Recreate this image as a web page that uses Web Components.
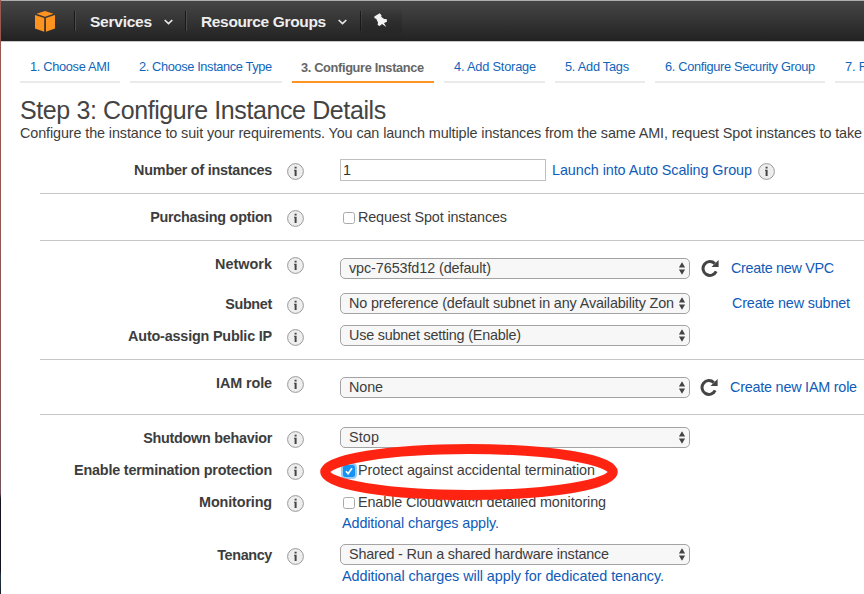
<!DOCTYPE html>
<html lang="en">
<head>
<meta charset="utf-8">
<title>Configure Instance Details</title>
<style>
html,body{margin:0;width:864px;height:594px;overflow:hidden;background:#fff}
body{font:14.4px/20px "Liberation Sans",Arial,sans-serif;color:#3d3d3d}
</style>
</head>
<body>
<launch-wizard></launch-wizard>
<script>
const define=(name,markup,setup)=>{
  const t=document.createElement('template');
  t.innerHTML=markup;
  customElements.define(name,class extends HTMLElement{
    connectedCallback(){
      if(this.shadowRoot)return;
      this.attachShadow({mode:'open'}).append(t.content.cloneNode(true));
      if(setup)setup(this,this.shadowRoot);
    }
  });
};

/* Text run tracked to an exact measure given in the w attribute. */
define('text-run',`<style>:host{display:inline-block;white-space:nowrap}span{display:inline-block;white-space:pre}</style><span><slot></slot></span>`,
(el,root)=>{
  const w=+el.getAttribute('w'),s=root.querySelector('span');
  if(!w)return;
  const n=el.textContent.length;
  s.style.letterSpacing=((w-s.getBoundingClientRect().width)/(n-.5))+'px';
  el.style.width=w+'px';
});

define('info-icon',`<style>:host{display:block;width:17px;height:17px}svg{display:block}</style>
<svg width="17" height="17" viewBox="0 0 17 17"><circle cx="8.5" cy="8.5" r="7.9" fill="#eee" stroke="#999"/><path d="M7.6 3.8h2v1.8h-2zM7 6.8h2.6v6.2h-2V7.7H7z" fill="#444"/></svg>`);

define('refresh-icon',`<style>:host{display:block;width:18px;height:18px;margin-top:1px}svg{display:block}</style>
<svg width="18" height="18" viewBox="0 0 18 18"><path d="M13.8 4.6A6.9 6.9 0 1 0 15.2 12.4" fill="none" stroke="#444" stroke-width="3"/><path d="M17.6 1v7.1h-7.1z" fill="#444"/></svg>`);

define('select-box',`<style>
:host{display:flex;box-sizing:border-box;width:350px;height:21px;border:1px solid #a3a3a3;border-radius:5px;background:#f7f7f7;padding:0 3px 0 8px;align-items:center;justify-content:space-between;line-height:19px}
svg{display:block;flex:none}</style>
<slot></slot><svg width="8" height="13" viewBox="0 0 8 13"><path d="M4 .3 7.1 5.5H.9zM4 12.7 7.1 7.5H.9z" fill="#444"/></svg>`);

define('check-box',`<style>
:host{display:flex;height:20px;padding-left:3px;gap:3px;align-items:center}
i{box-sizing:border-box;width:12px;height:12px;border:1px solid #aaa;border-radius:2.5px;background:#fff;flex:none;position:relative;top:1px}
svg{display:none}
:host([checked]) i{border:0;background:#1593f5;box-shadow:0 0 0 2px #9acbf5}
:host([checked]) svg{display:block}</style>
<i><svg width="12" height="12" viewBox="0 0 12 12"><path d="M3 6.3 5.1 8.8 9 3.2" fill="none" stroke="#fff" stroke-width="1.6"/></svg></i><slot></slot>`);

define('ui-link',`<style>:host{display:inline-block;color:#0f5bb8;white-space:nowrap}</style><slot></slot>`);

define('number-box',`<style>:host{display:block;box-sizing:border-box;width:206px;height:22px;border:1px solid #bfbfbf;padding-left:2px;line-height:20px;color:#333}</style><slot></slot>`);

/* Form row: right-aligned label, info button, control column. */
define('form-row',`<style>
:host{display:grid;grid-template-columns:232px 17px 1fr;column-gap:15px;height:20px}
.label{font-weight:bold;text-align:right;height:20px}
info-icon{margin-top:3px}
.control{margin-left:21px}
</style>
<div class="label"><slot name="label"></slot></div><info-icon></info-icon><div class="control"><slot></slot></div>`,
(el,root)=>{
  el.style.height=el.getAttribute('h')+'px';
  root.querySelector('.control').style.marginTop=(el.getAttribute('shift')||0)+'px';
});

define('h-line',`<style>:host{display:flex;align-items:flex-start;gap:var(--gap,0)}</style><slot></slot>`);

define('form-group',`<style>:host{display:block;box-sizing:border-box;margin-left:39px;padding-top:13px;border-bottom:1px solid #c6c6c6}:host([first]){padding-top:10px}:host([last]){border:0}</style><slot></slot>`);

define('step-tab',`<style>
:host{display:block;box-sizing:border-box;flex:none;height:33px;padding:8px 0 0 10px;border-bottom:2px solid #eaeaea;font-size:12.8px;line-height:18px;color:#1166bb}
:host([active]){border-bottom-color:#ff9426;color:#666;font-weight:bold;padding-top:9px}</style><slot></slot>`,
el=>el.style.width=el.getAttribute('width')+'px');

define('step-tabs',`<style>:host{display:flex;gap:10px;padding:8px 0 0 19px;overflow:hidden}</style><slot></slot>`);

define('nav-item',`<style>
:host{display:flex;align-items:center;box-sizing:border-box;height:20px;border-left:1px solid #191919;box-shadow:inset 1px 0 #4c4c4c;padding-left:15px;gap:12px;color:#eee;font:bold 15.5px/20px "Liberation Sans",Arial,sans-serif}
svg{display:block;margin-top:1px}</style><slot></slot><svg width="9" height="6" viewBox="0 0 9 6"><path d="M.7 1 4.5 4.6 8.3 1" fill="none" stroke="#e8e8e8" stroke-width="1.7"/></svg>`,
el=>el.style.width=el.getAttribute('width')+'px');

define('top-bar',`<style>
:host{display:flex;box-sizing:border-box;height:42px;border-top:1px solid #adadad;border-bottom:1px solid #c8c8c8;background:linear-gradient(#464646,#222);align-items:center}
text-run{padding-top:1px}
.cube{margin-left:34px;width:39px;height:21px}
.pin{box-sizing:border-box;width:42px;height:40px;display:flex;align-items:center}
.pin div{box-sizing:border-box;width:41px;height:29px;border-radius:0 0 3px 3px;background:linear-gradient(#2c2c2c00,#272727);padding:5px 0 0 13px;margin-top:3px}
.pin:before{content:"";height:20px;width:1px;background:#191919;box-shadow:1px 0 #4c4c4c}
svg{display:block}</style>
<div class="cube"><svg width="20" height="21" viewBox="0 0 20 21"><path d="M10 0 18.5 2.7 10 5.7 1.5 2.7zM0 4 9.2 7.1V20.8L0 17.4zM20 4 10.9 7.1V20.8L20 17.4z" fill="#ff9320"/></svg></div>
<nav-item width="111"><text-run w="62">Services</text-run></nav-item>
<nav-item width="175"><text-run w="125">Resource Groups</text-run></nav-item>
<div class="pin"><div><svg width="14" height="15" viewBox="0 0 14 15"><path d="M5.7.2 7.5 2.2 7.2 3.7 10.1 6 12.6 5.9 13 8.7 10 9.9 12.3 13.9 8 11 5.7 12.9 3.6 12 4 9.4 2.2 5.8.5 5.3.3 3.5z" fill="#f3f3f3"/></svg></div></div>`);

/* Emphasis ring over the termination row. */
define('highlight-ring',`<style>:host{position:absolute;left:320px;top:444px;width:298px;height:56px;pointer-events:none}svg{display:block}</style>
<svg width="298" height="56" viewBox="0 0 298 56"><ellipse cx="149" cy="28" rx="143.8" ry="23" fill="none" stroke="#ff2412" stroke-width="10"/></svg>`);

define('launch-wizard',`<style>
:host{display:flex;position:relative;width:864px;height:594px;overflow:hidden}
.edge{width:1px;flex:none;background:linear-gradient(#9b5850,#8c5551 60%,#735059 83%,#141420 84%,#10131e 96%,#26384b 97%,#141b28)}
main{flex:1;min-width:0}
h1{margin:15px 0 0 19px;font:normal 25px/24px "Liberation Sans",Arial,sans-serif;color:#444;white-space:nowrap}
p{margin:0 0 0 19px;height:27px;padding-top:1px;line-height:21px;white-space:nowrap}
</style>
<div class="edge"></div>
<main>
<top-bar></top-bar>
<step-tabs>
<step-tab width="100"><text-run w="80">1. Choose AMI</text-run></step-tab>
<step-tab width="152"><text-run w="133" style="margin-left:-1px">2. Choose Instance Type</text-run></step-tab>
<step-tab width="142" active><text-run w="123" style="margin-left:-1px">3. Configure Instance</text-run></step-tab>
<step-tab width="101"><text-run w="82">4. Add Storage</text-run></step-tab>
<step-tab width="90"><text-run w="64">5. Add Tags</text-run></step-tab>
<step-tab width="170"><text-run w="150">6. Configure Security Group</text-run></step-tab>
<step-tab width="90"><text-run w="55">7. Review</text-run></step-tab>
</step-tabs>
<h1><text-run w="366">Step 3: Configure Instance Details</text-run></h1>
<p><text-run w="842">Configure the instance to suit your requirements. You can launch multiple instances from the same AMI, request Spot instances to take</text-run></p>
<form-group first>
<form-row h="33" shift="-1"><text-run slot="label" w="138">Number of instances</text-run>
<h-line style="--gap:6px"><number-box>1</number-box><ui-link style="margin-top:1px"><text-run w="200">Launch into Auto Scaling Group</text-run></ui-link><info-icon style="margin-top:4px"></info-icon></h-line></form-row>
</form-group>
<form-group>
<form-row h="33"><text-run slot="label" w="122">Purchasing option</text-run><check-box><text-run w="149">Request Spot instances</text-run></check-box></form-row>
</form-group>
<form-group>
<form-row h="40" shift="4"><text-run slot="label" w="57">Network</text-run><h-line style="--gap:11px"><select-box><text-run w="142">vpc-7653fd12 (default)</text-run></select-box><refresh-icon></refresh-icon><ui-link><text-run w="103" style="margin-left:1px">Create new VPC</text-run></ui-link></h-line></form-row>
<form-row h="32" shift="-1"><text-run slot="label" w="47">Subnet</text-run><h-line style="--gap:42px"><select-box><text-run w="325">No preference (default subnet in any Availability Zon</text-run></select-box><ui-link><text-run w="118">Create new subnet</text-run></ui-link></h-line></form-row>
<form-row h="33" shift="-1"><text-run slot="label" w="144">Auto-assign Public IP</text-run><select-box><text-run w="172">Use subnet setting (Enable)</text-run></select-box></form-row>
</form-group>
<form-group>
<form-row h="41" shift="4"><text-run slot="label" w="56">IAM role</text-run><h-line style="--gap:10px"><select-box><text-run w="34">None</text-run></select-box><refresh-icon></refresh-icon><ui-link><text-run w="127" style="margin-left:2px">Create new IAM role</text-run></ui-link></h-line></form-row>
</form-group>
<form-group last>
<form-row h="32" shift="-1"><text-run slot="label" w="129">Shutdown behavior</text-run><select-box><text-run w="30">Stop</text-run></select-box></form-row>
<form-row h="32"><text-run slot="label" w="198">Enable termination protection</text-run><check-box checked><text-run w="237">Protect against accidental termination</text-run></check-box></form-row>
<form-row h="53"><text-run slot="label" w="73">Monitoring</text-run><check-box><text-run w="248">Enable CloudWatch detailed monitoring</text-run></check-box><ui-link style="margin:1px 0 0 2px"><text-run w="157">Additional charges apply.</text-run></ui-link></form-row>
<form-row h="49" shift="-1"><text-run slot="label" w="55">Tenancy</text-run><select-box><text-run w="260">Shared - Run a shared hardware instance</text-run></select-box><ui-link style="margin:1px 0 0 2px"><text-run w="322">Additional charges will apply for dedicated tenancy.</text-run></ui-link></form-row>
</form-group>
</main>
<highlight-ring></highlight-ring>`);
</script>
</body>
</html>
